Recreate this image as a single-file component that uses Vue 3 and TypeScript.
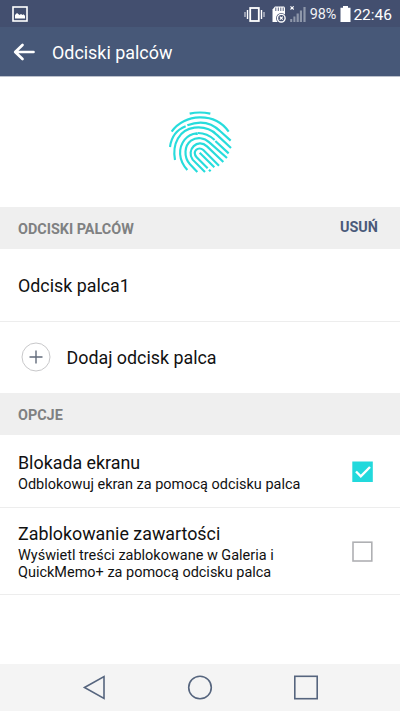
<script setup lang="ts">
import { ref } from 'vue'

interface Option {
  title: string
  lines: string[]
  checked: boolean
}

const options = ref<Option[]>([
  { title: 'Blokada ekranu', lines: ['Odblokowuj ekran za pomocą odcisku palca'], checked: true },
  {
    title: 'Zablokowanie zawartości',
    lines: ['Wyświetl treści zablokowane w Galeria i', 'QuickMemo+ za pomocą odcisku palca'],
    checked: false,
  },
])
</script>

<template>
  <div class="screen">
    <div class="status">
      <svg class="shot" width="16" height="16" viewBox="0 0 16 16">
        <rect x="1" y="1" width="14" height="14" fill="none" stroke="#fff" stroke-width="1.6" />
        <path d="M3 12.500V9l2-2 2.500 2 1.500-1 1.500 1 1-.8 1.500 1.500v2.800z" fill="#fff" />
      </svg>
      <div class="right">
        <svg width="64" height="20" viewBox="0 0 64 20">
          <rect x="6.200" y="4" width="8.600" height="13" fill="none" stroke="#fff" stroke-width="1.800" />
          <path d="M3.500 6v9M17.500 6v9" stroke="#fff" stroke-width="1.400" />
          <path d="M1 8v5M20 8v5" stroke="#fff" stroke-width="1.200" opacity=".75" />
          <path d="M31 2.500H40l1 1V18H28.500V5.500z" fill="#fff" />
          <path d="M31.800 3.500v3.500M34.300 3.500v3.500M36.800 3.500v3.500M39.200 3.500v3.500" stroke="#434f70" stroke-width=".9" />
          <circle cx="37.300" cy="14.200" r="5.200" fill="#434f70" />
          <circle cx="37.300" cy="14.200" r="3.800" fill="#434f70" stroke="#fff" stroke-width="1.400" />
          <path d="M35.800 12.700l3 3M38.800 12.700l-3 3" stroke="#fff" stroke-width="1.200" />
          <path d="M46.500 2.300l3.200 3.200M49.700 2.300l-3.200 3.200" stroke="#fff" stroke-width="1.100" />
          <path d="M46.200 15h2v3h-2zM49.400 12.500h2V18h-2zM52.600 9.500h2.200V18h-2.200zM55.900 6.500H58V18h-2.200zM59.400 3h2.200v15h-2.200z" fill="#8e97aa" />
        </svg>
        <span class="pct">98%</span>
        <svg class="battery" width="11" height="16" viewBox="0 0 11 16">
          <path d="M3 0h5v1.800h2.500V16H.5V1.800H3z" fill="#fff" />
        </svg>
        <span class="clock">22:46</span>
      </div>
    </div>

    <header class="bar">
      <svg width="22" height="18" viewBox="0 0 22 18">
        <path d="M9.500 2L2.200 9l7.300 7M2.500 9H20.500" fill="none" stroke="#fff" stroke-width="2.700" stroke-linecap="round" stroke-linejoin="round" />
      </svg>
      <h1>Odciski palców</h1>
    </header>

    <div class="hero">
      <svg width="80" height="80" viewBox="0 0 240 240" fill="none" stroke="#27dcdc" stroke-width="6.500">
        <path d="M89 38Q119 31 151 38" />
        <path d="M35 92C72 38 164 32 206 92" />
        <path d="M30 138C34 108 51 86 77 76M82 73C130 54 163 73 181 91L212 119" />
        <path d="M45 177C36 128 58 86 103 80C137 76 157 88 170 101L213 141" />
        <path d="M82 207C55 177 54 141 74 116Q88 99 110 97V102M114 96C136 96 149 103 164 117M166 120L206 157" />
        <path d="M112 213L90 190C70 167 73 134 93 119C111 107 133 110 148 124L201 171" />
        <path d="M135 213L98 176C77 147 113 110 141 136L190 183" />
        <path d="M152 211L147 206M143 202L110 169C95 151 115 134 130 147L177 194" />
        <path d="M119 155L163 199" />
      </svg>
    </div>

    <div class="section">
      <span>ODCISKI PALCÓW</span>
      <button type="button">USUŃ</button>
    </div>
    <div class="row first">Odcisk palca1</div>
    <div class="row add">
      <svg width="30" height="30" viewBox="0 0 30 30" fill="none">
        <circle cx="15" cy="15" r="14" stroke="#c8c8ca" />
        <path d="M15 8.500v13M8.500 15h13" stroke="#626b7b" stroke-width="1.400" />
      </svg>
      <span>Dodaj odcisk palca</span>
    </div>
    <div class="section"><span>OPCJE</span></div>
    <div v-for="o in options" :key="o.title" class="option" :class="{ tall: o.lines.length > 1 }">
      <div>
        <div class="title">{{ o.title }}</div>
        <div v-for="l in o.lines" :key="l" class="desc">{{ l }}</div>
      </div>
      <svg width="22" height="22" viewBox="0 0 22 22" fill="none" @click="o.checked = !o.checked">
        <template v-if="o.checked">
          <rect x=".3" y=".5" width="20.500" height="20.500" fill="#22d9dc" />
          <path d="M4 10.500l4.800 4.800L18 6" stroke="#fff" stroke-width="2.400" />
        </template>
        <rect v-else x="1" y="1.200" width="18.800" height="18.800" stroke="#afb0b3" stroke-width="1.600" />
      </svg>
    </div>

    <nav class="nav">
      <svg width="280" height="47" viewBox="0 0 280 47" fill="none" stroke="#56657e" stroke-width="1.600">
        <path d="M24.500 23.500L44 12.500v22z" />
        <circle cx="140" cy="23.500" r="11.300" />
        <rect x="234.800" y="12.300" width="22.400" height="22.400" />
      </svg>
    </nav>
  </div>
</template>

<style>
body {
  margin: 0;
}
</style>

<style scoped>
.screen {
  width: 400px;
  height: 711px;
  display: flex;
  flex-direction: column;
  background: #fff;
  color: #111;
  font-family: Roboto, sans-serif;
  overflow: hidden;
}
.status {
  height: 27px;
  flex: none;
  background: #434f6f;
  display: flex;
  justify-content: space-between;
  align-items: center;
  padding: 0 8px 0 12px;
  color: #fff;
}
.right {
  display: flex;
  align-items: center;
  line-height: 20px;
}
.pct {
  font-size: 14.4px;
  margin: 2px 4px 0 2px;
  color: #f1f2f6;
}
.clock {
  font-size: 15.5px;
  margin: 2px 0 0 2px;
}
.bar {
  height: 49px;
  flex: none;
  background: #475878;
  border-bottom: 1px solid #bcc1cc;
  box-sizing: content-box;
  display: flex;
  align-items: center;
  gap: 17px;
  padding-left: 13px;
}
h1 {
  margin: 1px 0 0;
  color: #fff;
  font-size: 17.9px;
  font-weight: 400;
}
.hero {
  height: 130px;
  flex: none;
  box-sizing: border-box;
  padding-bottom: 2px;
  display: flex;
  justify-content: center;
  align-items: center;
}
.section {
  height: 42px;
  flex: none;
  box-sizing: border-box;
  padding: 2px 22px 0 18px;
  display: flex;
  align-items: center;
  justify-content: space-between;
  background: #efefef;
  color: #7f8182;
  font-size: 14.4px;
  font-weight: 700;
}
button {
  border: 0;
  padding: 0 0 3px;
  background: none;
  font: inherit;
  color: #4a5a7a;
}
.row {
  height: 72px;
  flex: none;
  box-sizing: border-box;
  display: flex;
  align-items: center;
  padding-left: 18px;
  font-size: 17.85px;
}
.first {
  height: 73px;
  padding-top: 1px;
  border-bottom: 1px solid #ededed;
}
.add {
  height: 71px;
  padding-left: 20.5px;
  gap: 16px;
}
.add svg {
  margin-bottom: 1px;
}
.option {
  height: 73px;
  flex: none;
  box-sizing: border-box;
  display: flex;
  align-items: center;
  justify-content: space-between;
  padding: 2px 26px 0 18px;
  border-bottom: 1px solid #ededed;
}
.option.tall {
  height: 87px;
  padding-top: 1px;
}
.title {
  font-size: 17.85px;
  line-height: 23px;
  padding-bottom: 2px;
}
.desc {
  font-size: 14.47px;
  line-height: 17px;
}
.nav {
  height: 47px;
  flex: none;
  margin-top: auto;
  background: #f4f4f4;
  display: flex;
  justify-content: center;
}
</style>
